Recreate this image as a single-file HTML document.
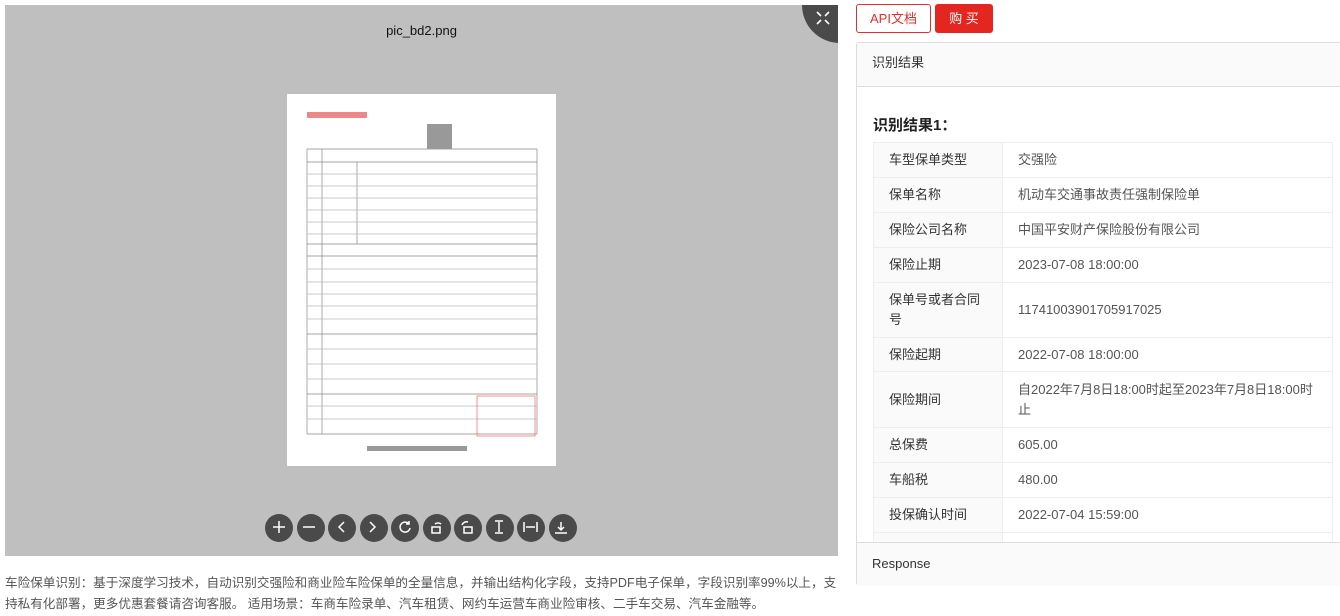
<!DOCTYPE html>
<html><head><meta charset="utf-8"><style>
*{margin:0;padding:0;box-sizing:border-box}
body{width:1340px;height:616px;background:#fff;font-family:"Liberation Sans","Noto Sans CJK SC",sans-serif;position:relative;overflow:hidden;color:#333}
.left{position:absolute;left:5px;top:5px;width:833px;height:551px;background:#bfbfbf;overflow:hidden}
.fs{position:absolute;left:797px;top:-38px;width:76px;height:76px;border-radius:50%;background:#4a4a4a}
.title{position:absolute;top:18px;width:100%;text-align:center;font-size:13px;color:#111}
.doc{position:absolute;left:282px;top:89px;width:269px;height:372px;background:#fff}
.tools{position:absolute;top:509px;left:260px;display:flex;gap:3.5px}
.tools div{width:28px;height:28px;border-radius:50%;background:#4a4a4a}
.desc{position:absolute;left:5px;top:573px;width:835px;font-size:12.6px;line-height:21px;color:#555}
.btn{position:absolute;top:4px;height:29px;border-radius:3px;font-size:13px;line-height:27px;text-align:center}
.panel{position:absolute;left:856px;top:42px;width:490px;height:544px;border:1px solid #ddd;border-radius:3px;background:#fff}
.ph{height:44px;background:#fafafa;border-bottom:1px solid #ddd;font-size:13px;line-height:40px;padding-left:15px}
.rt{position:absolute;left:16px;font-size:15px;font-weight:bold;color:#222}
table{position:absolute;left:16px;width:460px;border-collapse:collapse;font-size:13px}
td{border:1px solid #eee;padding:0 15px;line-height:20px}
td:first-child{width:129px;background:#fafafa;color:#333}
td:last-child{color:#555}
.wrap{position:absolute;left:0;top:43px;width:488px;height:456px;overflow:hidden}
.resp{position:absolute;left:0;top:499px;width:488px;height:44px;border-top:1px solid #ddd;background:#fafafa;font-size:13px;line-height:42px;padding-left:15px}
</style></head><body>
<div class="left">
<div class="fs"><svg style="position:absolute;left:14px;top:44px" width="14" height="14" viewBox="0 0 14 14" stroke="#fff" stroke-width="1.6" fill="none"><path d="M1 1l4 4M13 1l-4 4M1 13l4-4M13 13l-4-4"/></svg></div>
<div class="title">pic_bd2.png</div>
<div class="doc"><svg width="269" height="372" viewBox="0 0 269 372" stroke="#888" stroke-width="0.7" fill="none">
<path d="M20 55h230M20 68h230M20 150h230M20 162h230M20 240h230M20 300h230M20 340h230M20 55v285M250 55v285M35 55v285M70 68v82"/>
<path d="M20 80h230M20 92h230M20 104h230M20 116h230M20 128h230M20 140h230M20 175h230M20 188h230M20 200h230M20 212h230M20 225h230M20 255h230M20 270h230M20 285h230M20 312h230M20 325h230" stroke="#bbb"/>
<rect x="140" y="30" width="25" height="25" fill="#999" stroke="none"/>
<rect x="190" y="302" width="58" height="40" stroke="#e66"/>
<rect x="20" y="18" width="60" height="6" fill="#e88" stroke="none"/>
<rect x="80" y="352" width="100" height="5" fill="#999" stroke="none"/>
</svg></div>
<div class="tools"><div></div><div></div><div></div><div></div><div></div><div></div><div></div><div></div><div></div><div></div></div>
</div>
<svg style="position:absolute;left:265px;top:514px" width="320" height="28" fill="none" stroke="#fff" stroke-width="1.5">
<path d="M14 7v12M8 13h12"/><path d="M38 13h12"/><path d="M79 8l-5 5 5 5"/><path d="M105 8l5 5-5 5"/>
<path d="M144 10a5 5 0 1 0 1 4M144 7v3h-3"/>
<rect x="167" y="13" width="8" height="6"/><path d="M170 10a5 5 0 0 1 6 0"/>
<rect x="199" y="13" width="8" height="6"/><path d="M197 11a5 5 0 0 1 6-3"/>
<path d="M230 7h8M230 19h8M234 8v10"/><path d="M259 8v10M272 8v10M261 13h9"/><path d="M296 8v8M293 13l3 3 3-3M290 19h12"/>
</svg>
<div class="desc">车险保单识别：基于深度学习技术，自动识别交强险和商业险车险保单的全量信息，并输出结构化字段，支持PDF电子保单，字段识别率99%以上，支持私有化部署，更多优惠套餐请咨询客服。 适用场景：车商车险录单、汽车租赁、网约车运营车商业险审核、二手车交易、汽车金融等。</div>
<div class="btn" style="left:856px;width:75px;border:1px solid #e0302a;color:#e0302a;background:#fff">API文档</div>
<div class="btn" style="left:935px;width:58px;background:#e3261f;color:#fff;border:1px solid #e3261f">购 买</div>
<div class="panel">
<div class="ph">识别结果</div>
<div class="wrap">
<div class="rt" style="top:28px">识别结果1：</div>
<table style="top:56px">
<tr style="height:35px"><td>车型保单类型</td><td>交强险</td></tr>
<tr style="height:35px"><td>保单名称</td><td>机动车交通事故责任强制保险单</td></tr>
<tr style="height:35px"><td>保险公司名称</td><td>中国平安财产保险股份有限公司</td></tr>
<tr style="height:35px"><td>保险止期</td><td>2023-07-08 18:00:00</td></tr>
<tr style="height:55px"><td>保单号或者合同号</td><td>11741003901705917025</td></tr>
<tr style="height:34px"><td>保险起期</td><td>2022-07-08 18:00:00</td></tr>
<tr style="height:56px"><td>保险期间</td><td>自2022年7月8日18:00时起至2023年7月8日18:00时止</td></tr>
<tr style="height:35px"><td>总保费</td><td>605.00</td></tr>
<tr style="height:35px"><td>车船税</td><td>480.00</td></tr>
<tr style="height:35px"><td>投保确认时间</td><td>2022-07-04 15:59:00</td></tr>
<tr style="height:35px"><td>投保人名称</td><td>中国平安财产保险股份有限公司</td></tr>
</table>
</div>
<div class="resp">Response</div>
</div>
</body></html>
